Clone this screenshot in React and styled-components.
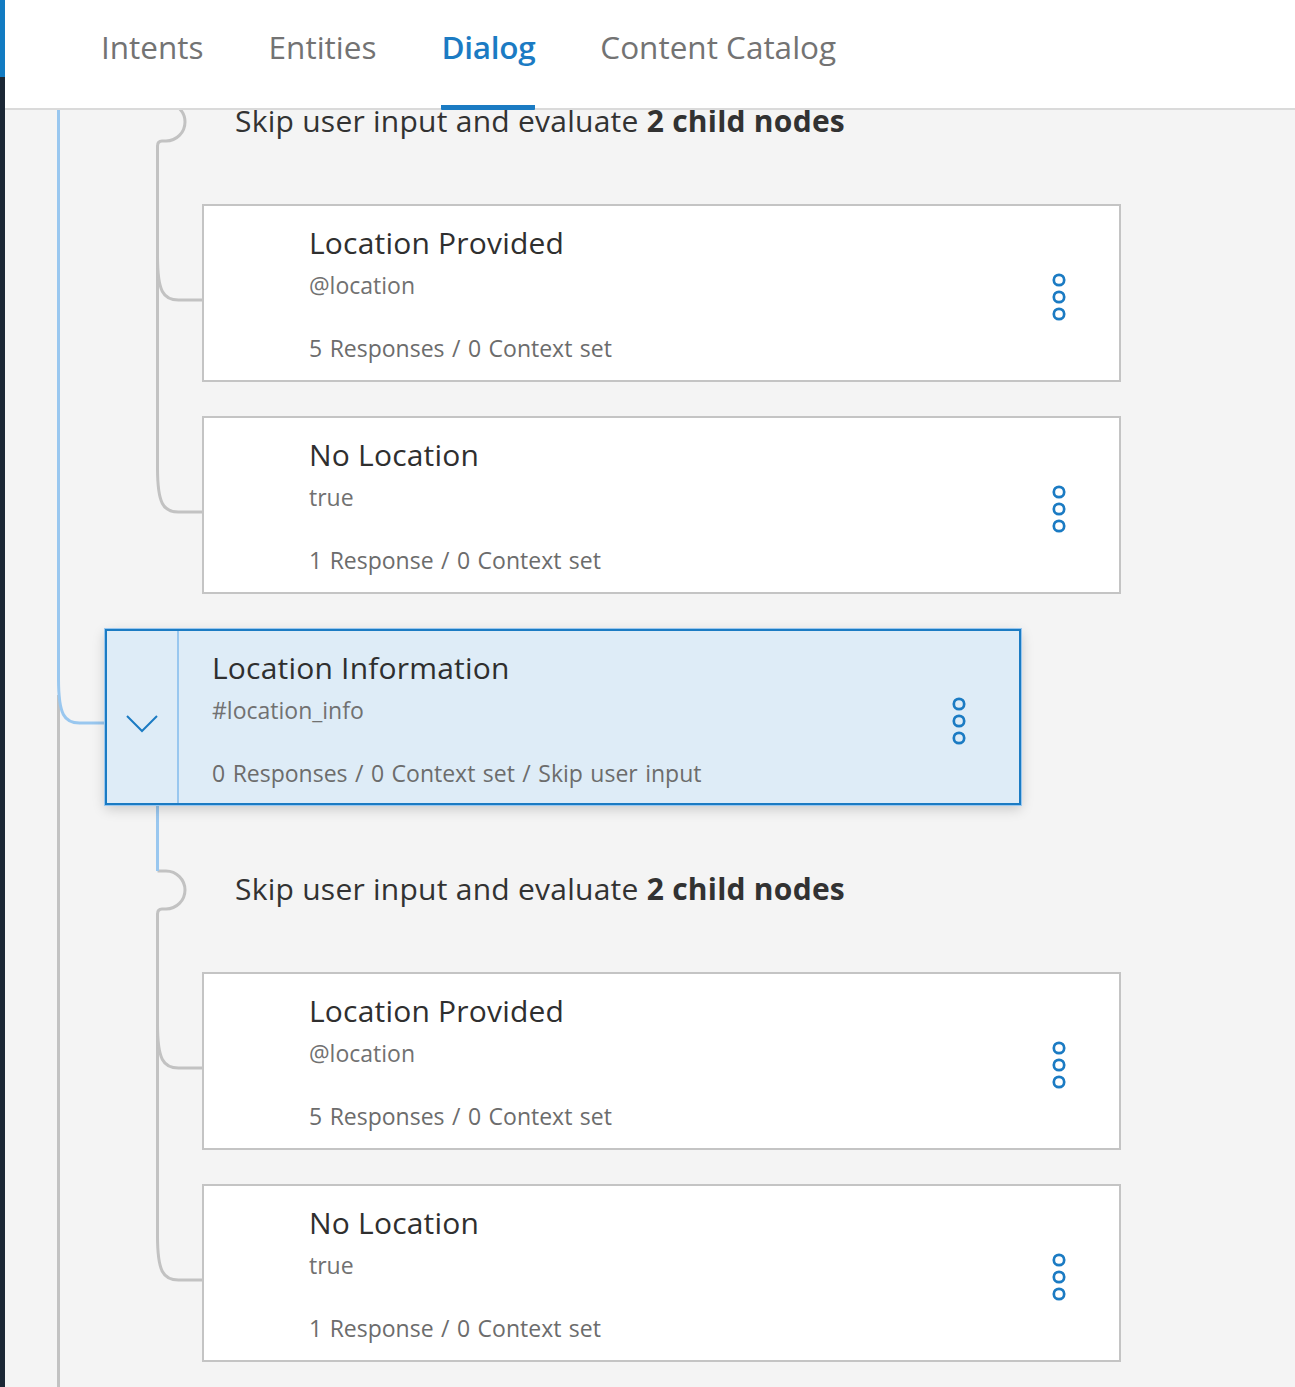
import React from 'react';
import styled, { createGlobalStyle } from 'styled-components';

const GlobalStyle = createGlobalStyle`
  html, body {
    margin: 0;
    padding: 0;
    background: #f4f4f4;
  }
  body {
    font-family: "Open Sans", "Noto Sans", sans-serif;
    color: #323232;
  }
  * {
    box-sizing: border-box;
  }
  svg {
    display: block;
  }
`;

const BLUE = '#1b7bc3';
const LIGHT_BLUE = '#99c7ef';
const LINE_GRAY = '#c2c2c2';

const Page = styled.div`
  display: flex;
  height: 1387px;
  overflow: hidden;
`;

const SideStrip = styled.div`
  width: 5px;
  flex-shrink: 0;
  background: linear-gradient(to bottom, #127bc2 0, #127bc2 77px, #1b2735 77px);
`;

const Main = styled.div`
  flex: 1;
  display: flex;
  flex-direction: column;
  min-width: 0;
`;

const Header = styled.nav`
  height: 110px;
  flex-shrink: 0;
  display: flex;
  gap: 65px;
  padding-left: 96px;
  background: #fff;
  border-bottom: 2px solid #dadada;
  position: relative;
  z-index: 2;
`;

const Tab = styled.div`
  height: calc(100% + 2px);
  margin-bottom: -2px;
  padding-top: 27px;
  font-size: 31.5px;
  line-height: 40px;
  font-weight: ${p => (p.$active ? 600 : 400)};
  letter-spacing: ${p => (p.$active ? '-0.3px' : '0')};
  color: ${p => (p.$active ? BLUE : '#737373')};
  border-bottom: 5px solid ${p => (p.$active ? BLUE : 'transparent')};
  border-radius: 0 0 1px 1px;
  white-space: nowrap;
`;

const Canvas = styled.div`
  flex: 1;
  display: flex;
  overflow: hidden;
  background: #f4f4f4;
`;

const Trunk = styled.div`
  width: 99px;
  flex-shrink: 0;
`;

const Tree = styled.div`
  display: flex;
  flex-direction: column;
`;

const Group = styled.div`
  display: flex;
  margin-top: ${p => p.$offset || 0}px;
  margin-bottom: ${p => p.$after || 0}px;
`;

const Gutter = styled.div`
  width: 98px;
  flex-shrink: 0;
`;

const GroupBody = styled.div`
  display: flex;
  flex-direction: column;
  gap: 34px;
`;

const SkipLabel = styled.div`
  height: 133px;
  padding: 66px 0 0 33px;
  font-size: 30px;
  line-height: 36px;
  letter-spacing: 0.25px;
  color: #323232;
  white-space: nowrap;

  b {
    font-weight: 700;
  }
`;

const Card = styled.div`
  display: flex;
  width: ${p => (p.$selected ? 916 : 919)}px;
  height: ${p => (p.$selected ? 176 : 178)}px;
  margin: ${p => (p.$selected ? '1px 0 0 1px' : '0')};
  background: ${p => (p.$selected ? '#deecf7' : '#fff')};
  border: 2px solid ${p => (p.$selected ? BLUE : '#c4c4c4')};
  box-shadow: ${p =>
    p.$selected
      ? `0 0 0 1px ${LIGHT_BLUE}, 0 4px 12px rgba(0, 0, 0, 0.18)`
      : 'none'};
  position: relative;
  z-index: ${p => (p.$selected ? 1 : 0)};
`;

const Toggle = styled.div`
  width: 72px;
  flex-shrink: 0;
  display: flex;
  align-items: center;
  justify-content: center;
  padding-top: 12px;
  border-right: 2px solid ${p => (p.$selected ? LIGHT_BLUE : 'transparent')};
`;

const CardText = styled.div`
  flex: 1;
  display: flex;
  flex-direction: column;
  padding: 19px 0 0 33px;
  min-width: 0;
`;

const Title = styled.div`
  font-size: 30px;
  line-height: 36px;
  letter-spacing: 0.2px;
  color: #2f2f2f;
`;

const Condition = styled.div`
  margin-top: 10px;
  font-size: 23px;
  line-height: 28px;
  color: #717171;
`;

const Meta = styled.div`
  margin-top: 35px;
  font-size: 23px;
  line-height: 28px;
  word-spacing: 1.5px;
  color: #6c6c6c;
  white-space: nowrap;
`;

const MenuButton = styled.div`
  display: flex;
  align-items: center;
  padding: 8px 53px 0 0;
`;

const Kebab = () => (
  <svg width="14" height="48" viewBox="0 0 14 48">
    {[7, 24, 41].map(cy => (
      <circle key={cy} cx="7" cy={cy} r="5.2" fill="none" stroke={BLUE} strokeWidth="2.7" />
    ))}
  </svg>
);

const Chevron = () => (
  <svg width="34" height="19" viewBox="0 0 34 19">
    <polyline points="2,2 17,17 32,2" fill="none" stroke={BLUE} strokeWidth="2" />
  </svg>
);

const X = 53.5;

// curve from the vertical line into a node at height y
const branch = y => `C ${X} ${y - 8} ${X + 6} ${y} ${X + 21} ${y}`;

const TrunkLines = () => (
  <svg width="99" height="1277" viewBox="0 0 99 1277">
    <path d={`M ${X} 585 V 1277`} fill="none" stroke={LINE_GRAY} strokeWidth="3" />
    <path d={`M ${X} 0 V 569 ${branch(613)} H 99`} fill="none" stroke={LIGHT_BLUE} strokeWidth="3" />
  </svg>
);

const GroupLines = ({ active, rows }) => {
  const last = rows[rows.length - 1];
  return (
    <svg width="98" height="557" viewBox="0 0 98 557">
      <path
        d={`M ${X} 66 H 62 A 19 19 0 0 1 62 104 H 58 Q ${X} 104 ${X} 109 V ${last - 44}`}
        fill="none"
        stroke={LINE_GRAY}
        strokeWidth="3"
      />
      {rows.map(y => (
        <path key={y} d={`M ${X} ${y - 44} ${branch(y)} H 98`} fill="none" stroke={LINE_GRAY} strokeWidth="3" />
      ))}
      <path d={`M ${X} 0 V 66`} fill="none" stroke={active ? LIGHT_BLUE : LINE_GRAY} strokeWidth="3" />
    </svg>
  );
};

const NodeCard = ({ node, selected }) => (
  <Card $selected={selected}>
    <Toggle $selected={selected}>{selected && <Chevron />}</Toggle>
    <CardText>
      <Title>{node.title}</Title>
      <Condition>{node.condition}</Condition>
      <Meta>{node.meta}</Meta>
    </CardText>
    <MenuButton>
      <Kebab />
    </MenuButton>
  </Card>
);

const children = [
  { title: 'Location Provided', condition: '@location', meta: '5 Responses / 0 Context set' },
  { title: 'No Location', condition: 'true', meta: '1 Response / 0 Context set' },
];

const ChildGroup = ({ active, offset, after }) => (
  <Group $offset={offset} $after={after}>
    <Gutter>
      <GroupLines active={active} rows={[263, 475]} />
    </Gutter>
    <GroupBody>
      <SkipLabel>
        Skip user input and evaluate <b>2 child nodes</b>
      </SkipLabel>
      {children.map(n => (
        <NodeCard key={n.title} node={n} />
      ))}
    </GroupBody>
  </Group>
);

const tabs = ['Intents', 'Entities', 'Dialog', 'Content Catalog'];

const App = () => (
  <>
    <GlobalStyle />
    <Page>
      <SideStrip />
      <Main>
        <Header>
          {tabs.map(t => (
            <Tab key={t} $active={t === 'Dialog'}>
              {t}
            </Tab>
          ))}
        </Header>
        <Canvas>
          <Trunk>
            <TrunkLines />
          </Trunk>
          <Tree>
            <ChildGroup offset={-73} after={34} />
            <NodeCard
              selected
              node={{
                title: 'Location Information',
                condition: '#location_info',
                meta: '0 Responses / 0 Context set / Skip user input',
              }}
            />
            <ChildGroup active />
          </Tree>
        </Canvas>
      </Main>
    </Page>
  </>
);

export default App;
